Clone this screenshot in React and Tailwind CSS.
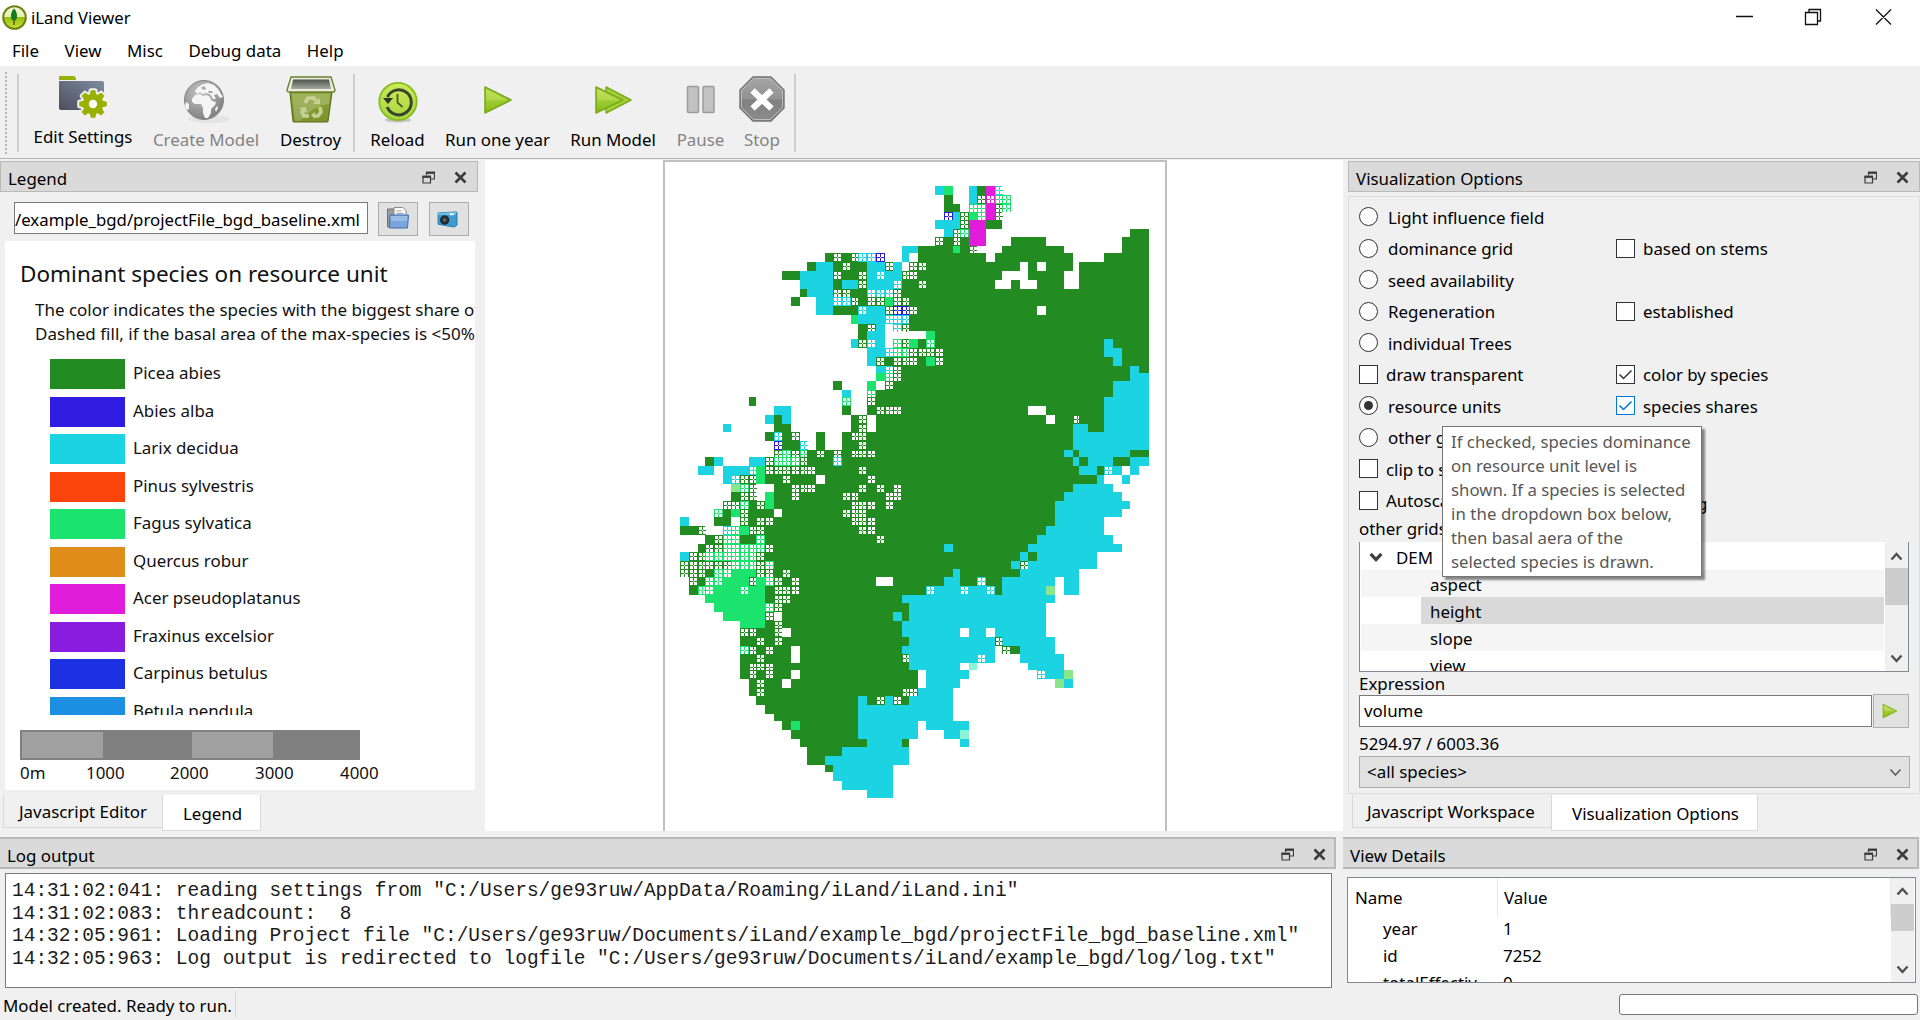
import React from "react";

const COLORS = {
  G: "#228b22", C: "#1cd3e2", F: "#1ce26e", M: "#e21cdb", B: "#2f1ce0",
  L: "#8ae68a", A: "#8af5d4", ".": "#ffffff",
};

/* column and row boundaries of the resource unit grid, in page pixels */
const X = [680,689,698,705,714,723,731,740,749,756,765,774,782,791,800,807,816,825,833,842,851,858,867,876,885,893,902,909,918,926,935,944,953,960,969,977,986,995,1002,1011,1020,1028,1037,1046,1055,1064,1073,1079,1088,1097,1104,1113,1122,1130,1139,1149];
const Y = [186,195,204,212,220,229,237,246,253,262,271,280,289,297,306,315,324,331,339,348,357,366,373,381,390,397,406,415,424,432,441,450,457,466,475,484,492,501,509,517,526,535,544,552,561,569,577,586,595,603,612,621,628,637,646,654,663,670,679,688,696,705,714,721,730,739,747,756,765,772,781,790,798];

/* one string per grid row; each token is a species code with a column range.
   Lower case codes are drawn hatched (share below 50%). */
const ROWS = [
  "C30 F31 C34 G35 M36 c37",
  "G31 C34 g35 m36 f37-38",
  "G31-32 f34-35 M36 g37 f38",
  "b31 C32 g33 F34 f35 M36 g37",
  "C30-32 g33 M34-35 G36-37",
  "C31 g32 f33 M34-35 G53-54",
  "g30 G31 g32 G33 M34-35 G39-42 G52-54",
  "C26-27 G28-33 F32 g34 G38-44 G52-54",
  "G17 g18 G19 g20 c21-22 b23 C26 G28-35 G37-45 G50-54",
  "G15 C16-17 G18 g19 G20-21 C22-23 g24 C25 g27-28 G29-54 .40 .42 .46",
  "G12-13 C14-17 g18 G19-20 g21 C22 c23 C24-25 g26-27 G28-54 .38-40 .45-46",
  "C14-17 G18 C19-20 g21 C22-24 c25 G26-54 g28 .37-38 .40-41 .45-46",
  "G14 C15-17 g18-19 G20-21 c22-24 g25 G26-54",
  "G13 C16-17 c18-19 g20 G21 g22-23 F24 g25-26 G27-54",
  "C16-17 G18-20 c21 C22-23 g24 b25-26 g27 G28-54 .42",
  "F20 C21-23 c24-26 G27-54",
  "G21 g22 C23 c25 g26 G27-54",
  "G21 C22-23 F29 G30-54",
  "C20 g21 c22 C23 f25 g26 F27 G28 f29 G30-54 C50",
  "C22-23 c24 f25-26 g27-30 G31-54 C50-51",
  "C22 g23 G24 g25-27 G28 F29 g30 G31-54 C51",
  "C23 c24 g25 G26-54 C53",
  "F23 f24 g25 G26-54 C53-54",
  "G18 F22 g24 G25-54 C51-54",
  "C19 f22 G23-54 C51-54",
  "G8 f19 g22 G23-54 C50-54",
  "C11-12 G19 G22-54 g23-25 .41-42 C50-54",
  "C10 G11 C12 G20 g21 G23-54 .43 g46 C50-54",
  "C5 G11-12 G20 g21 G23-54 C46-47 C50-54",
  "G10 c11 G12 g13 G16 G19-54 g20-21 C46-54",
  "b11 G12-13 c14 G16 G19-54 g21 C46-54",
  "g11 f12 g13 f14 G15 g16 G17 g18 G19-54 g20-22 C45 C47-52",
  "G3 C4 C8-9 g10 f11-13 g14 G15-54 c18 C46 C48-50 C53-54",
  "C2-3 C5-7 c8 F9 g10-15 G16-49 g21 C47-48 c50 C51 C53",
  "C5 c6 g7-8 F9 G10-48 g12 .16 g22 C49 C52",
  "L6 f7 g8 G11-45 g13-15 g21 g23 g25 C46-50",
  "G6 g7-8 F10 G11-44 g13 g19-20 g24-25 C45-51",
  "g5-6 f7 G8 g9 F10 G11-43 g20-22 g24 C44-52",
  "f4 G5 F6 g7 G8-43 .11 g19-21 C44-51",
  "C0 G4-5 g7 G8-43 g9-10 g20-22 C44-49",
  "G0-1 g2 c5 f6 F7 g8-9 G10-42 g21-22 C43-49",
  "G3 g4 f5-6 G7-8 f9 G10-41 g23 C42-50",
  "G2 g3-4 f5-9 g10 G11-40 C31 C41-51",
  "C0 g1-2 f3-8 g9 G10-41 C40 C42-48",
  "g0-5 f6-8 g9 f10 G11-38 C39 g40 C41-48",
  "g0-2 G3 f4-5 F6-8 g9-10 G11-39 g12 C32 C40-46",
  "g1 G2 f3-4 F5-7 g8 F9 f10 g11 G12-37 g13 .23-24 C31-32 c35 C38-43 C45-46",
  "G1 f2-3 F4-9 f7 G10 g11-13 G14-28 c29 C30-36 c33 c36 G37 C38-42 L43 C45-46",
  "F3-9 G10 g11-12 G13-25 C26-43",
  "F4-9 f10 g11 G12-26 C27-42",
  "F5-9 g10 G12-26 C25 C27-42",
  "F7-9 G10-25 g11 C26-42",
  "g7-8 G9-10 g11 G13-25 C26-42 .33 .36",
  "G7-26 g9 g11 C27-43 g37",
  "f7 g8 G9-25 g10 .13 C26-36 g38 G39 C40-43",
  "G7-25 g9 .13 g26 C27-36 c35 C40-44",
  "G7-26 g8-10 C27-32 A34 C41-44",
  "G7-27 g8 g10 .13 C29-33 c42 C43-44 L45",
  "G8-27 g9 .12 C29-32 L44 C45",
  "G8-25 g9 g26-27 C28-31",
  "G9-26 C21 g23 C24 g25 C27-31",
  "G10-20 C21-31",
  "G11-20 C21-31",
  "G12-20 F13 C21-27 C29-33",
  "G13-20 C21-27 C31-32 A33",
  "G14-21 C22-26 G26 C33",
  "G15-18 C19-26",
  "G15-16 C17-26",
  "G17 C18-24",
  "C18-24",
  "C19-24",
  "C22-24",
];

/* hatch of one cell: a frame and a cross, left open at the centre */
function hatchPath(c, r) {
  const x = X[c], y = Y[r], w = X[c + 1] - x, h = Y[r + 1] - y;
  let d = `M${x} ${y}h${w}v1h-${w}zM${x} ${y + 1}h1v${h - 1}h-1z`;
  if (w > 8) d += `M${x + 8} ${y + 1}h1v${h - 1}h-1z`;
  if (h > 8) d += `M${x + 1} ${y + 8}h7v1h-7z`;
  d += `M${x + 4} ${y + 1}h1v3h-1zM${x + 4} ${y + 5}h1v3h-1z`;
  d += `M${x + 1} ${y + 4}h3v1h-3zM${x + 5} ${y + 4}h3v1h-3z`;
  return d;
}

function Cells() {
  const out = [];
  ROWS.forEach((row, r) => {
    row.split(" ").forEach((tok, i) => {
      const code = tok[0];
      const [a, b] = tok.slice(1).split("-").map(Number);
      const end = b === undefined ? a : b;
      const up = code.toUpperCase();
      const box = { x: X[a], y: Y[r], width: X[end + 1] - X[a], height: Y[r + 1] - Y[r] };
      const hatched = code !== up;
      out.push(<rect key={r + "-" + i} {...box} fill={hatched ? "#fff" : COLORS[up]} />);
      if (hatched) {
        let d = "";
        for (let c = a; c <= end; c++) d += hatchPath(c, r);
        out.push(<path key={r + "h" + i} d={d} fill={COLORS[up]} />);
      }
    });
  });
  return out;
}

function SpeciesMap() {
  return (
    <svg className="block" width="500" height="669" viewBox="665 162 500 669" shapeRendering="crispEdges">
      <Cells />
    </svg>
  );
}

const Play = ({ s = 30 }) => (
  <svg width={s} height={s} viewBox="0 0 30 30">
    <defs>
      <linearGradient id="play" x1="0" y1="0" x2="0" y2="1">
        <stop offset="0" stopColor="#b9dc50" /><stop offset="1" stopColor="#86bc14" />
      </linearGradient>
    </defs>
    <path d="M2 2 L28 15 L2 28Z" fill="url(#play)" stroke="#7aab1e" strokeWidth="1.6" strokeLinejoin="round" />
    <path d="M3.5 4.5 L24.5 15 L3.5 15.5Z" fill="#cfe873" opacity=".4" />
  </svg>
);

const FolderGear = () => (
  <svg width="50" height="44" viewBox="0 0 50 44">
    <defs>
      <linearGradient id="fg" x1="0" y1="1" x2="1" y2="0">
        <stop offset="0" stopColor="#4b4e5c" /><stop offset="1" stopColor="#7f8ca0" />
      </linearGradient>
    </defs>
    <path d="M1 1h14q3 0 3 4H1z" fill="#9ab000" />
    <path d="M1 6h43q2 0 2 2v24q0 3-3 3H3q-2 0-2-2z" fill="url(#fg)" />
    <g fill="#f0f0f0" stroke="#f0f0f0" strokeWidth="4" strokeLinejoin="round">
      <circle cx="35" cy="29" r="10.3" />
      {[0, 45, 90, 135, 180, 225, 270, 315].map((a) => (
        <path key={a} d="M31.7 20 32.7 15.2h4.6L38.3 20z" transform={`rotate(${a} 35 29)`} />
      ))}
    </g>
    <g fill="#9ab000">
      <circle cx="35" cy="29" r="10.3" />
      {[0, 45, 90, 135, 180, 225, 270, 315].map((a) => (
        <path key={a} d="M31.7 20 32.7 15.2h4.6L38.3 20z" transform={`rotate(${a} 35 29)`} />
      ))}
    </g>
    <circle cx="35" cy="29" r="4.2" fill="#fff" />
  </svg>
);

const Globe = () => (
  <svg width="50" height="46" viewBox="0 0 50 46">
    <defs>
      <radialGradient id="gl" cx=".4" cy=".3" r=".75">
        <stop offset="0" stopColor="#c4c4c4" /><stop offset="1" stopColor="#7d7d7d" />
      </radialGradient>
    </defs>
    <ellipse cx="28" cy="41" rx="21" ry="4" fill="#e4e4e4" />
    <circle cx="23" cy="22" r="19.5" fill="url(#gl)" stroke="#858585" />
    <g fill="#f5f5f5">
      <path d="M11 21l3-4 5-1 3 2 3-1 3 1 3 5 4 1-1 3-4 4 0 4-3 5-3 0-2-5 0-5-2-4-6 0-3-2z" />
      <path d="M14 13l3-4 5-3 5-1 6 2 4 4 5 8-3 1-3-4-3 1 2 4-3 0-3-5-4-1-3 1-3-2-3 2z" />
      <path d="M5 24l3 2 0 5-2 1-2-4z" />
      <path d="M36 28l1 2-2 4-1-3z" />
    </g>
    <path d="M20 10l3-2 2 3-2 1zM27 13l4 0 1 2-4 0z" fill="#a5a5a5" />
  </svg>
);

const Bin = () => (
  <svg width="50" height="48" viewBox="0 0 50 48">
    <defs>
      <linearGradient id="bn" x1="0" y1="0" x2="0" y2="1">
        <stop offset="0" stopColor="#8ba336" /><stop offset="1" stopColor="#7d922c" />
      </linearGradient>
      <linearGradient id="bi" x1="0" y1="0" x2="0" y2="1">
        <stop offset="0" stopColor="#4f514b" /><stop offset="1" stopColor="#a6a8a2" />
      </linearGradient>
    </defs>
    <path d="M4 16h42l-4 29q0 1-2 1H9q-2 0-2-1z" fill="url(#bn)" stroke="#5d6e1c" strokeWidth="1.2" />
    <path d="M6 18h38l-1 10Q26 30 14 45h-5z" fill="#fff" opacity=".2" />
    <path d="M5 1h40l4 13q0 2-2 2H3q-2 0-2-2z" fill="#ebecdf" stroke="#6f8030" strokeWidth="1.4" />
    <path d="M7 3.5h36l2 9.500H5z" fill="url(#bi)" />
    <g fill="none" stroke="#c6d193" strokeWidth="3.600">
      <path d="M19 27l3-5h6l2 3" /><path d="M34 31l1 5-3 4h-3" /><path d="M23 40h-5l-2-4 2-3" />
    </g>
    <path d="M34 22v6h-7z M29 36v7l-4-4z M13 32l7-1 1 6z" fill="#c6d193" />
  </svg>
);

const Reload = () => (
  <svg width="42" height="42" viewBox="0 0 42 42">
    <defs>
      <linearGradient id="rl" x1="0" y1="0" x2="0" y2="1">
        <stop offset="0" stopColor="#cdea5a" /><stop offset="1" stopColor="#a6d63c" />
      </linearGradient>
    </defs>
    <ellipse cx="21" cy="39" rx="13" ry="2.500" fill="#c4c4c4" />
    <circle cx="21" cy="20.500" r="18.700" fill="url(#rl)" stroke="#84bc20" strokeWidth="1.8" />
    <path d="M10.500 16A12.500 12.500 0 1 1 10.200 26" fill="none" stroke="#3c4430" strokeWidth="3" />
    <path d="M6 17h10l-5 6z" fill="#2e3428" />
    <path d="M20.500 13v8.500l5 4.500" fill="none" stroke="#4d5a2c" strokeWidth="1.800" />
  </svg>
);

const RunAll = () => (
  <svg width="39" height="30" viewBox="0 0 39 30">
    <path d="M12 2 L37 15 L12 28Z" fill="#a5d038" stroke="#7aab1e" strokeWidth="1.500" strokeLinejoin="round" />
    <path d="M2 2 L29 15 L2 28Z" fill="url(#play)" stroke="#7aab1e" strokeWidth="1.600" strokeLinejoin="round" />
    <path d="M3.500 4.500 L25 15 L3.500 15.500Z" fill="#cfe873" opacity=".4" />
  </svg>
);

const Pause = () => (
  <svg width="30" height="30" viewBox="0 0 30 30">
    <g fill="#c2c2c2" stroke="#9c9c9c" strokeWidth="1.500">
      <rect x="1.500" y="1.500" width="11" height="26" rx="1" />
      <rect x="17" y="1.500" width="11" height="26" rx="1" />
    </g>
  </svg>
);

const Stop = () => (
  <svg width="46" height="46" viewBox="0 0 46 46">
    <defs>
      <linearGradient id="st" x1="0" y1="0" x2="0" y2="1">
        <stop offset="0" stopColor="#a6a6a6" /><stop offset=".5" stopColor="#929292" /><stop offset=".52" stopColor="#808080" /><stop offset="1" stopColor="#8c8c8c" />
      </linearGradient>
    </defs>
    <path d="M14 1h18l13 13v18L32 45H14L1 32V14z" fill="url(#st)" stroke="#757575" strokeWidth="1.400" />
    <path d="M14.500 2.500h17l12 12v17l-12 12h-17l-12-12v-17z" fill="none" stroke="#bdbdbd" />
    <path d="M13.500 14.500l19 18M32.500 14.500l-19 18" stroke="#fff" strokeWidth="6.200" />
  </svg>
);

const Chevron = ({ up, s = 15, w = 2.4, c = "#505050" }) => (
  <svg width={s} height={s} viewBox="0 0 15 15" fill="none" stroke={c} strokeWidth={w}>
    <path d={up ? "M2.500 10.500L7.500 5l5 5.500" : "M2.500 4.500l5 5.500 5-5.500"} />
  </svg>
);

function DockTitle({ children, thick }) {
  return (
    <div className={`flex shrink-0 items-center border-[#b9b9b9] bg-[#dadada] pl-[7px] ${thick ? "h-[32px] border-y-2 border-r-2 pt-[3px] pr-[8px]" : "h-[31px] border pt-[2px] pr-[10px]"}`}>
      <span className="grow pt-[2px]">{children}</span>
      <svg width="13" height="13" viewBox="0 0 13 13" fill="none" stroke="#3c3c3c" className="mr-[19px]">
        <path d="M4.500 4V1.500h8V8H9" strokeWidth="1.200" /><path d="M4 1.700h9" strokeWidth="2.400" />
        <path d="M1 5.500h7.500v6.500H1z" strokeWidth="1.200" /><path d="M.5 5.700h8.500" strokeWidth="2.400" />
      </svg>
      <svg width="13" height="13" viewBox="0 0 13 13" stroke="#3c3c3c" strokeWidth="2.600">
        <path d="M1.500 1.500l10 10M11.500 1.500l-10 10" />
      </svg>
    </div>
  );
}

const Tool = ({ w, icon, label, off, top = "h-[61px]", pt = "pt-[2px]" }) => (
  <div className={`flex flex-col items-center ${w} ${off ? "text-[#838383]" : ""}`}>
    <div className={`flex shrink-0 items-center justify-center ${top} ${pt}`}>{icon}</div>
    <div className="leading-[22px] whitespace-nowrap">{label}</div>
  </div>
);
const Sep = () => <div className="mt-[6px] h-[78px] w-[2px] shrink-0 bg-[#cdcdcd]" />;

const Radio = ({ label, on }) => (
  <div className="flex h-[31.500px] w-[257px] items-center whitespace-nowrap">
    <span className="flex size-[19px] shrink-0 items-center justify-center rounded-full border border-[#333] bg-white">
      {on && <span className="size-[9px] rounded-full bg-[#333]" />}
    </span>
    <span className="pt-px pl-[10px]">{label}</span>
  </div>
);
const Check = ({ label, on, blue, left }) => (
  <div className={`flex h-[31.500px] items-center whitespace-nowrap ${left ? "w-[257px]" : ""}`}>
    <span className={`flex size-[19px] shrink-0 items-center justify-center border bg-white ${blue ? "border-[#0078d7]" : "border-[#333]"}`}>
      {on && (
        <svg width="15" height="15" viewBox="0 0 15 15" fill="none" stroke={blue ? "#0078d7" : "#333"} strokeWidth="1.500">
          <path d="M1.500 7.500l4 4L13.500 3.500" />
        </svg>
      )}
    </span>
    <span className="pt-px pl-[8px]">{label}</span>
  </div>
);

const SPECIES = [
  ["Picea abies", "bg-[#228b22]"], ["Abies alba", "bg-[#2f1ce0]"], ["Larix decidua", "bg-[#1cd3e2]"],
  ["Pinus sylvestris", "bg-[#fa440c]"], ["Fagus sylvatica", "bg-[#1ce26e]"], ["Quercus robur", "bg-[#df8e1c]"],
  ["Acer pseudoplatanus", "bg-[#e21cdb]"], ["Fraxinus excelsior", "bg-[#881cdf]"], ["Carpinus betulus", "bg-[#1c32e2]"],
  ["Betula pendula", "bg-[#1c8fe2]"],
];

function LegendPanel() {
  return (
    <div className="flex w-[478px] shrink-0 flex-col">
      <DockTitle>Legend</DockTitle>
      <div className="flex h-[49px] shrink-0 pt-[10px] pl-[14px]">
        <div className="flex h-[32px] w-[354px] items-center overflow-hidden border border-[#7a7a7a] bg-white pt-[3px] text-[16.800px] whitespace-nowrap">
          /example_bgd/projectFile_bgd_baseline.xml
        </div>
        <div className="ml-[10px] flex h-[34px] w-[40px] items-center justify-center border border-[#adadad] bg-[#e1e1e1] pb-[2px]">
          <svg width="24" height="24" viewBox="0 0 24 24">
            <path d="M1.500 3h8v18h-8z" fill="#9c9c9c" stroke="#6e6e6e" />
            <path d="M8 1.500h9l3 3V13H8z" fill="#fafafa" stroke="#8a8a8a" /><path d="M10.500 5h5M10.500 7.500h7" stroke="#999" />
            <path d="M4 9h18.500l-1 13H3.500z" fill="#78a5dc" stroke="#3f6dad" /><path d="M4.500 10h17l-.5 5H5z" fill="#a9c6ea" opacity=".7" />
          </svg>
        </div>
        <div className="ml-[11px] flex h-[34px] w-[40px] items-center justify-center border border-[#adadad] bg-[#e1e1e1] pr-[2px]">
          <svg width="22" height="17" viewBox="0 0 23 18">
            <path d="M1 2l19-1q1 0 1 1v13l-3 2-17-3z" fill="#3d9bd0" stroke="#2279ae" /><path d="M1 2l19-1v3H1z" fill="#6fc1ea" />
            <circle cx="8" cy="9.500" r="5" fill="#222b33" /><circle cx="8" cy="9.500" r="2" fill="#56646e" />
            <rect x="13.500" y="2.500" width="4" height="2" fill="#fff" />
          </svg>
        </div>
      </div>
      <div className="ml-[5px] flex h-[549px] w-[470px] shrink-0 flex-col overflow-hidden bg-white text-[#111]">
        <div className="shrink-0 pt-[17px] pl-[15px] text-[22.500px] leading-[32px] whitespace-nowrap">Dominant species on resource unit</div>
        <div className="h-[69px] shrink-0 pt-[8px] pl-[30px] text-[17px] leading-[24px] whitespace-nowrap">
          <div className="tracking-[-0.02px]">The color indicates the species with the biggest share of</div>
          <div className="tracking-[0.02px]">Dashed fill, if the basal area of the max-species is &lt;50%</div>
        </div>
        <div className="flex h-[356px] shrink-0 flex-col gap-[7.500px] overflow-hidden pl-[45px]">
          {SPECIES.map(([n, c]) => (
            <div key={n} className="flex h-[30px] shrink-0">
              <div className={`w-[75px] ${c}`} />
              <div className="pl-[8px] leading-[27px]">{n}</div>
            </div>
          ))}
        </div>
        <div className="mt-[15px] ml-[15px] flex h-[30px] w-[340px] shrink-0 gap-[89px] bg-[#808080] p-[2px]">
          <div className="w-[81px] bg-[#a0a0a0]" />
          <div className="w-[81px] bg-[#a0a0a0]" />
        </div>
        <div className="flex pt-[1px] pl-[15px] leading-[24px]">
          <span className="w-[66px]">0m</span><span className="w-[84px]">1000</span><span className="w-[85px]">2000</span><span className="w-[85px]">3000</span><span>4000</span>
        </div>
      </div>
      <div className="mt-[5px] flex pl-[3px]">
        <div className="h-[33px] w-[159px] border-b border-l border-[#d9d9d9] pl-[15px] leading-[33px]">Javascript Editor</div>
        <div className="h-[36px] w-[99px] border border-t-0 border-[#d9d9d9] bg-white pl-[20px] leading-[38px]">Legend</div>
      </div>
    </div>
  );
}

function OptionsPanel() {
  return (
    <div className="ml-[5px] flex w-[572px] shrink-0 flex-col">
      <DockTitle>Visualization Options</DockTitle>
      <div className="relative mt-[4px] flex h-[598px] shrink-0 flex-col border border-[#dcdcdc] pt-[4px] pl-[10px]">
        <Radio label="Light influence field" />
        <div className="flex"><Radio label="dominance grid" /><Check label="based on stems" /></div>
        <Radio label="seed availability" />
        <div className="flex"><Radio label="Regeneration" /><Check label="established" /></div>
        <Radio label="individual Trees" />
        <div className="flex"><Check left label="draw transparent" /><Check on label="color by species" /></div>
        <div className="flex"><Radio on label="resource units" /><Check on blue label="species shares" /></div>
        <Radio label="other grid" />
        <Check left label="clip to stand" />
        <div className="flex"><Check left label="Autoscale colors" /><span className="pt-[6px] pl-[81px]">g</span></div>
        <div className="h-[26px] leading-[26px]">other grids</div>
        <div className="flex h-[130px] w-[550px] shrink-0 border border-t-0 border-[#828790] bg-white">
          <div className="flex grow flex-col overflow-hidden pl-px leading-[27px]">
            <div className="flex h-[28px] shrink-0 items-center gap-[12px] pt-[2px] pl-[7px]"><Chevron w={3} s={16} c="#404040" />DEM</div>
            <div className="h-[27px] shrink-0 bg-[#f5f5f5] pt-px pl-[69px]">aspect</div>
            <div className="ml-[60px] h-[27px] shrink-0 bg-[#d9d9d9] pt-px pl-[9px]">height</div>
            <div className="h-[27px] shrink-0 bg-[#f5f5f5] pt-px pl-[69px]">slope</div>
            <div className="h-[27px] shrink-0 pt-px pl-[69px]">view</div>
          </div>
          <div className="ml-px flex w-[23px] shrink-0 flex-col items-center bg-[#f0f0f0] pt-[7px]">
            <Chevron up />
            <div className="mt-[4px] h-[37px] w-full bg-[#cdcdcd]" />
            <div className="mt-auto mb-[5px]"><Chevron /></div>
          </div>
        </div>
        <div className="h-[22px] shrink-0 leading-[24px]">Expression</div>
        <div className="flex h-[34px] shrink-0 gap-px">
          <div className="my-px w-[513px] border border-[#7a7a7a] bg-white pl-[4px] leading-[30px]">volume</div>
          <div className="flex w-[36px] items-center justify-center border border-[#adadad] bg-[#e1e1e1] pr-[2px]"><Play s={16} /></div>
        </div>
        <div className="h-[28px] shrink-0 leading-[31px]">5294.97 / 6003.36</div>
        <div className="flex h-[32px] w-[551px] shrink-0 items-center justify-between border border-[#adadad] bg-[#e1e1e1] pr-[6px] pl-[7px]">
          &lt;all species&gt;<Chevron w={1.4} />
        </div>
        <div className="absolute top-[229px] left-[93px] h-[151px] w-[260px] border border-[#767676] bg-white pt-[3px] pl-[8px] text-[16.800px] leading-[24px] whitespace-nowrap text-[#575757] shadow-[3px_3px_2px_rgba(0,0,0,0.45)]">
          <div>If checked, species dominance</div>
          <div>on resource unit level is</div>
          <div>shown. If a species is selected</div>
          <div className="tracking-[0.08px]">in the dropdown box below,</div>
          <div>then basal aera of the</div>
          <div>selected species is drawn.</div>
        </div>
      </div>
      <div className="mt-px flex pl-[4px]">
        <div className="h-[33px] w-[199px] border-b border-l border-[#d9d9d9] pl-[14px] leading-[34px]">Javascript Workspace</div>
        <div className="h-[36px] w-[207px] border border-t-0 border-[#d9d9d9] bg-white pl-[20px] leading-[38px]">Visualization Options</div>
      </div>
    </div>
  );
}

export default function App() {
  return (
    <div className="flex h-[1020px] w-[1920px] flex-col overflow-hidden bg-[#f0f0f0] font-['Noto_Sans',sans-serif] text-[16.900px] text-black">
      <div className="flex h-[34px] shrink-0 items-center bg-white pl-[2px]">
        <svg width="25" height="25" viewBox="0 0 25 25">
          <defs>
            <linearGradient id="lg" x1="0" y1="0" x2="0" y2="1">
              <stop offset="0" stopColor="#f4f8dc" /><stop offset=".48" stopColor="#e6efb0" /><stop offset=".5" stopColor="#97bd10" /><stop offset="1" stopColor="#c8e838" />
            </linearGradient>
          </defs>
          <circle cx="12.500" cy="12.500" r="11.300" fill="url(#lg)" stroke="#6d8216" strokeWidth="2" />
          <path d="M12 12v8" stroke="#6b4a20" strokeWidth="1.500" />
          <path d="M12 3.500q3 3 3 7.500t-3 4.500q-3 0-3-4.500t3-7.500z" fill="#117a1c" />
        </svg>
        <span className="grow pt-[3px] pl-[4px] text-[16.600px]">iLand Viewer</span>
        <svg width="160" height="18" viewBox="0 0 160 18" fill="none" stroke="#111" strokeWidth="1.300" className="mr-[26px]">
          <path d="M2 8.500h17M71.500 4.500h12v12h-12zM75 4.500v-3h11.500v11.500h-3M142 1.500l15 15M157 1.500l-15 15" />
        </svg>
      </div>
      <div className="flex h-[32px] shrink-0 items-center gap-[25.500px] bg-white pt-[2px] pl-[12px]">
        {["File", "View", "Misc", "Debug data", "Help"].map((m) => <span key={m}>{m}</span>)}
      </div>
      <div className="flex h-[93px] shrink-0 border-b border-[#b4b4b4] pt-[2px]">
        <div className="mt-[4px] ml-[5px] h-[82px] w-[2px] shrink-0 bg-[repeating-linear-gradient(#b4b4b4_0_2px,#f0f0f0_2px_4px)]" />
        <div className="ml-[10px] flex">
          <Sep />
          <div className="w-[3px]" />
          <Tool w="w-[122px]" icon={<FolderGear />} label="Edit Settings" top="h-[58px]" pt="pt-0" />
          <Tool w="w-[124px]" icon={<Globe />} label="Create Model" off pt="pt-[4px]" />
          <Tool w="w-[85px]" icon={<Bin />} label="Destroy" />
          <Sep />
          <Tool w="w-[85px]" icon={<Reload />} label="Reload" pt="pt-[7px]" />
          <Tool w="w-[115px]" icon={<Play />} label="Run one year" pt="pt-[3px]" />
          <Tool w="w-[116px]" icon={<RunAll />} label="Run Model" pt="pt-[3px]" />
          <Tool w="w-[59px]" icon={<Pause />} label="Pause" off pt="pt-[3px]" />
          <Tool w="w-[64px]" icon={<Stop />} label="Stop" off pt="pt-0" />
          <Sep />
        </div>
      </div>
      <div className="flex h-[678px] shrink-0 pt-[2px]">
        <LegendPanel />
        <div className="-mt-px ml-[7px] flex h-[671px] w-[858px] shrink-0 bg-white pl-[178px]">
          <div className="border-x-2 border-t-2 border-[#c0c0c0] bg-white"><SpeciesMap /></div>
        </div>
        <OptionsPanel />
      </div>
      <div className="flex h-[151px] shrink-0">
        <div className="flex w-[1336px] shrink-0 flex-col">
          <DockTitle thick>Log output</DockTitle>
          <div className="mt-[4px] ml-[5px] h-[115px] w-[1327px] border border-[#7a7a7a] bg-white pt-[6px] pl-[6px] font-['Liberation_Mono',monospace] text-[19.500px] leading-[22.600px] whitespace-pre text-[#1c1c1c]">
            <div>14:31:02:041: reading settings from "C:/Users/ge93ruw/AppData/Roaming/iLand/iLand.ini"</div>
            <div>14:31:02:083: threadcount:  8</div>
            <div>14:32:05:961: Loading Project file "C:/Users/ge93ruw/Documents/iLand/example_bgd/projectFile_bgd_baseline.xml"</div>
            <div>14:32:05:963: Log output is redirected to logfile "C:/Users/ge93ruw/Documents/iLand/example_bgd/log/log.txt"</div>
          </div>
        </div>
        <div className="ml-[7px] flex w-[576px] shrink-0 flex-col">
          <DockTitle thick>View Details</DockTitle>
          <div className="mt-[8px] ml-[4px] flex h-[106px] w-[569px] border border-[#828790] bg-white">
            <div className="grid grow grid-cols-[150px_1fr] grid-rows-[38px_26px_26px_26px] overflow-hidden leading-[26px]">
              <div className="border-r border-[#e5e5e5] pl-[7px] leading-[39px]">Name</div>
              <div className="border-r border-[#e5e5e5] pl-[6px] leading-[39px]">Value</div>
              <div className="pl-[35px]">year</div><div className="pl-[5px]">1</div>
              <div className="pt-px pl-[35px]">id</div><div className="pt-px pl-[5px]">7252</div>
              <div className="pt-[2px] pl-[35px]">totalEffectiv</div><div className="pt-[2px] pl-[5px]">0</div>
            </div>
            <div className="mr-px flex w-[23px] shrink-0 flex-col items-center bg-[#f0f0f0] pt-[6px]">
              <Chevron up />
              <div className="mt-[5px] h-[27px] w-full bg-[#cdcdcd]" />
              <div className="mt-auto mb-[5px]"><Chevron /></div>
            </div>
          </div>
        </div>
      </div>
      <div className="flex h-[32px] items-center pl-[3px]">
        <span className="w-[232px] pt-[3px] whitespace-nowrap">Model created. Ready to run.</span>
        <div className="h-[26px] w-px bg-[#d7d7d7]" />
        <div className="mr-[2px] ml-auto h-[21px] w-[299px] rounded-[3px] border border-[#777] bg-white" />
      </div>
    </div>
  );
}
